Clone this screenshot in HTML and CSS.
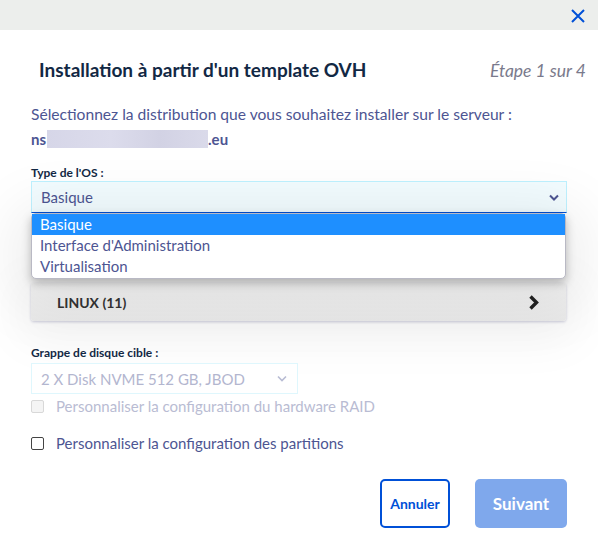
FILE: index.html
```html
<!DOCTYPE html>
<html lang="fr">
<head>
    <meta charset="UTF-8">
    <title>Installation</title>
    <link rel="stylesheet" href="styles.css">
</head>
<body>

    <div class="topbar">
        <button class="close" aria-label="Fermer">
            <svg width="14" height="14" viewBox="0 0 14 14"><path d="M1 1L13 13M13 1L1 13" stroke="#0050d7" stroke-width="2" fill="none"/></svg>
        </button>
    </div>

    <div class="modal">
        <div class="head">
            <h2 class="title">Installation à partir d'un template OVH</h2>
            <span class="step">Étape 1 sur 4</span>
        </div>

        <p class="intro">Sélectionnez la distribution que vous souhaitez installer sur le serveur :</p>
        <p class="host">ns<span class="blur"></span>.eu</p>

        <label class="label">Type de l'OS :</label>
        <div class="os-select">
            <div class="select active">
                <span>Basique</span>
                <svg class="caret" width="10" height="7" viewBox="0 0 10 7"><path d="M1 1.5L5 5.5L9 1.5" stroke="#4d5592" stroke-width="2" fill="none"/></svg>
            </div>
            <ul class="options">
                <li class="selected">Basique</li>
                <li>Interface d'Administration</li>
                <li>Virtualisation</li>
            </ul>
        </div>

        <div class="card">
            <span>LINUX (11)</span>
            <svg width="11" height="15" viewBox="0 0 11 15"><path d="M2.5 1.5L8.5 7.5L2.5 13.5" stroke="#222" stroke-width="3.4" fill="none"/></svg>
        </div>

        <label class="label label-disk">Grappe de disque cible :</label>
        <div class="select disabled small">
            <span>2 X Disk NVME 512 GB, JBOD</span>
            <svg class="caret" width="10" height="7" viewBox="0 0 10 7"><path d="M1 1.5L5 5.5L9 1.5" stroke="#b8bcd4" stroke-width="1.6" fill="none"/></svg>
        </div>

        <div class="check off">
            <span class="box"></span>Personnaliser la configuration du hardware RAID
        </div>
        <div class="check">
            <span class="box"></span>Personnaliser la configuration des partitions
        </div>

        <div class="actions">
            <button class="btn btn-outline">Annuler</button>
            <button class="btn btn-primary">Suivant</button>
        </div>
    </div>

</body>
</html>
```

FILE: styles.css
```css
body {
    margin: 0;
    background-color: #fff;
    font-family: Lato, "Noto Sans", sans-serif;
    color: #4d5592;
}

.topbar {
    height: 30px;
    background-color: #eceeec;
    display: flex;
    justify-content: flex-end;
    align-items: center;
}

.close {
    border: 0;
    background: none;
    padding: 0;
    margin-right: 13px;
    margin-top: 2px;
    display: flex;
}

.modal {
    padding: 0 31px;
}

.head {
    display: flex;
    justify-content: space-between;
    align-items: center;
    margin: 28px -19px 0 8px;
}

.title {
    margin: 0;
    font-size: 19px;
    font-weight: 700;
    color: #122844;
    line-height: 24px;
}

.step {
    font-style: italic;
    font-size: 17.5px;
    color: #7a7a8c;
}

.intro {
    margin: 22px 0 0;
    font-size: 15.6px;
    line-height: 20px;
}

.host {
    margin: 5px 0 0;
    font-size: 15px;
    font-weight: 700;
    line-height: 20px;
    display: flex;
    align-items: center;
}

.blur {
    display: inline-block;
    width: 161px;
    height: 18px;
    margin-left: 1px;
    background: linear-gradient(90deg, #d6d6e8, #dcdcec 40%, #d2d2e4 70%, #dadaea);
}

.label {
    display: block;
    margin-top: 16px;
    font-size: 12px;
    font-weight: 700;
    color: #122844;
    line-height: 16px;
}

.os-select {
    position: relative;
    margin-top: 0;
}

.select {
    height: 32px;
    box-sizing: border-box;
    display: flex;
    justify-content: space-between;
    align-items: center;
    padding: 0 7px 0 9px;
    font-size: 15px;
    border: 1px solid #bef1ff;
    background-color: #f2fcff;
}

.select.active {
    border-bottom: 1px solid #0050d7;
}

.options {
    position: absolute;
    left: 0;
    right: 1px;
    top: 32px;
    margin: 0;
    padding: 0 0 1px;
    list-style: none;
    background-color: #fff;
    border: 1px solid #b9b9c4;
    border-radius: 5px;
    box-shadow: 0 4px 10px rgba(0, 0, 0, 0.25), 0 10px 60px 15px rgba(0, 0, 0, 0.08);
    z-index: 2;
}

.options li {
    padding: 0 8px;
    font-size: 15px;
    line-height: 21px;
}

.options li.selected {
    background-color: #1e8fff;
    color: #fff;
}

.card {
    margin: 70px 1px 0 0;
    height: 38px;
    display: flex;
    justify-content: space-between;
    align-items: center;
    padding: 0 27px 0 26px;
    background: linear-gradient(#f3f3f3, #e9e9e9);
    border-radius: 3px;
    box-shadow: 0 1px 3px rgba(0, 0, 80, 0.2), 0 8px 50px 10px rgba(0, 0, 0, 0.05);
    color: #333;
    font-size: 14px;
    font-weight: 700;
}

.label-disk {
    margin-top: 24px;
}

.select.small {
    width: 267px;
    height: 31px;
    margin-top: 2px;
    padding-right: 10px;
}

.select.disabled {
    background-color: #fff;
    border-color: #dff7fd;
    color: #b3b6cf;
}

.check {
    display: flex;
    align-items: center;
    margin-top: 17px;
    font-size: 15px;
    line-height: 20px;
}

.check.off {
    margin-top: 2px;
    color: #b9bcd3;
}

.box {
    width: 11px;
    height: 11px;
    border: 1px solid #444;
    border-radius: 2px;
    margin: 0 12px 0 0;
}

.check.off .box {
    border-color: #d8d8d8;
    background-color: #f4f4f4;
}

.actions {
    display: flex;
    justify-content: flex-end;
    gap: 25px;
    margin-top: 26px;
}

.btn {
    height: 49px;
    border-radius: 5px;
    font-family: Lato, "Noto Sans", sans-serif;
    font-weight: 700;
    font-size: 14px;
}

.btn-outline {
    width: 70px;
    border: 2px solid #0050d7;
    background-color: #fff;
    color: #0050d7;
}

.btn-primary {
    width: 92px;
    border: 0;
    background-color: #7fa8ec;
    color: #fff;
    font-size: 17px;
}
```
